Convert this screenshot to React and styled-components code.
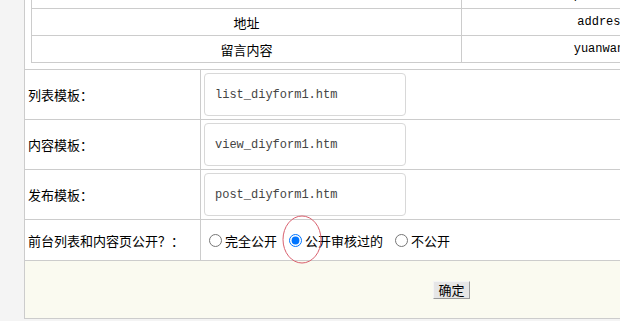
import React from "react";
import styled, { createGlobalStyle } from "styled-components";

const Global = createGlobalStyle`
  html, body { margin: 0; padding: 0; }
  body {
    background: #f4f4f4;
    overflow: hidden;
    font-family: "Noto Sans CJK SC", "Liberation Sans", sans-serif;
    font-size: 13px;
    color: #000;
  }
`;

const Panel = styled.div`
  margin: -19px 0 0 24px;
  width: 853px;
  background: #fff;
  border-left: 1px solid #ccc;
  border-bottom: 1px solid #ccc;
`;

const PreviewRow = styled.div`
  padding: 0 6px 6px 6px;
  border-bottom: 1px solid #ccc;
`;

const FieldTable = styled.div`
  border: 1px solid #ccc;
  display: grid;
  grid-template-columns: 430px 282px 1fr;
`;

const FieldCell = styled.div`
  height: 26px;
  display: flex;
  align-items: center;
  justify-content: center;
  border-bottom: ${(p) => (p.$last ? "none" : "1px solid #ccc")};
  border-right: ${(p) => (p.$end ? "none" : "1px solid #ccc")};
  font-family: ${(p) =>
    p.$mono ? `"Liberation Mono", monospace` : `"Noto Sans CJK SC", sans-serif`};
  font-size: ${(p) => (p.$mono ? "12px" : "13px")};
  white-space: nowrap;
  overflow: hidden;
`;

const FormRow = styled.div`
  box-sizing: border-box;
  display: grid;
  grid-template-columns: 176px 1fr;
  height: ${(p) => p.$h}px;
  border-bottom: 1px solid #ccc;
`;

const Label = styled.div`
  display: flex;
  align-items: center;
  padding-left: 3px;
  border-right: 1px solid #ccc;
  white-space: nowrap;
`;

const Value = styled.div`
  position: relative;
  display: flex;
  align-items: center;
  padding-left: ${(p) => p.$pad}px;
`;

const TextInput = styled.input`
  box-sizing: border-box;
  width: 202px;
  height: 43px;
  margin: 0;
  padding: 0 10px;
  border: 1px solid #d8d8d8;
  border-radius: 4px;
  background: #fff;
  font-family: "Liberation Mono", monospace;
  font-size: 12px;
  color: #444;
  outline: none;
`;

const RadioGroup = styled.div`
  display: flex;
  align-items: center;
  gap: 12px;
`;

const RadioLabel = styled.label`
  display: inline-flex;
  align-items: center;
  gap: 3px;
  white-space: nowrap;
`;

const Radio = styled.input`
  margin: 0;
  width: 13px;
  height: 13px;
`;

const Mark = styled.svg`
  position: absolute;
  left: 81px;
  top: -5px;
  width: 40px;
  height: 50px;
  pointer-events: none;
  overflow: visible;
`;

const Footer = styled.div`
  height: 57px;
  background: #fafaf0;
  display: flex;
  align-items: center;
  justify-content: center;
`;

const SubmitButton = styled.button`
  box-sizing: border-box;
  width: 37px;
  height: 18px;
  margin: 0;
  padding: 0;
  border: 1px solid;
  border-color: #f4f4f4 #999 #999 #f4f4f4;
  background: #e6e6e6;
  font-family: "Noto Sans CJK SC", sans-serif;
  font-size: 13px;
  line-height: 16px;
  color: #000;
`;

const fields = [
  ["", "postcode", ""],
  ["地址", "address", "varchar"],
  ["留言内容", "yuanwang", "multitext"],
];

const templates = [
  ["列表模板：", "list_diyform1.htm"],
  ["内容模板：", "view_diyform1.htm"],
  ["发布模板：", "post_diyform1.htm"],
];

export default function App() {
  return (
    <>
      <Global />
      <Panel>
        <PreviewRow>
          <FieldTable>
            {fields.map(([name, key, type], i) => {
              const last = i === fields.length - 1;
              return (
                <React.Fragment key={key}>
                  <FieldCell $last={last}>{name}</FieldCell>
                  <FieldCell $last={last} $mono>
                    {key}
                  </FieldCell>
                  <FieldCell $last={last} $end $mono>
                    {type}
                  </FieldCell>
                </React.Fragment>
              );
            })}
          </FieldTable>
        </PreviewRow>
        {templates.map(([label, value]) => (
          <FormRow key={value} $h={50}>
            <Label>{label}</Label>
            <Value $pad={3}>
              <TextInput defaultValue={value} />
            </Value>
          </FormRow>
        ))}
        <FormRow $h={41}>
          <Label>前台列表和内容页公开？：</Label>
          <Value $pad={8}>
            <RadioGroup>
              <RadioLabel>
                <Radio type="radio" name="pub" />
                完全公开
              </RadioLabel>
              <RadioLabel>
                <Radio type="radio" name="pub" defaultChecked />
                公开审核过的
              </RadioLabel>
              <RadioLabel>
                <Radio type="radio" name="pub" />
                不公开
              </RadioLabel>
            </RadioGroup>
            <Mark viewBox="0 0 40 50">
              <ellipse cx="20" cy="24.5" rx="19" ry="23.5" fill="none" stroke="#d9606e" strokeWidth="1" />
            </Mark>
          </Value>
        </FormRow>
        <Footer>
          <SubmitButton type="button">确定</SubmitButton>
        </Footer>
      </Panel>
    </>
  );
}
